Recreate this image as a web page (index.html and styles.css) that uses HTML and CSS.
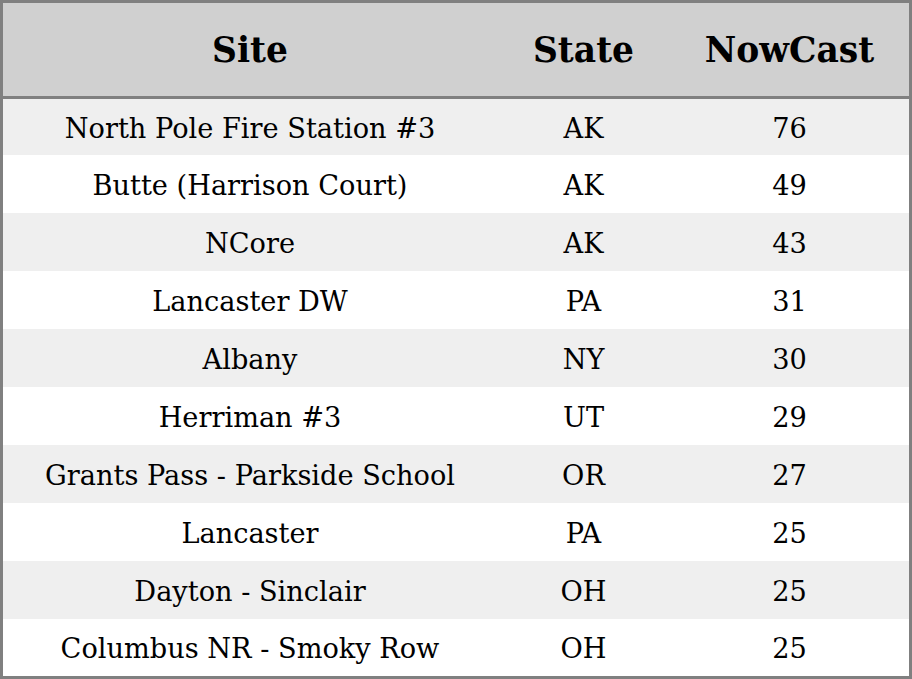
FILE: index.html
```html
<!DOCTYPE html>
<html>
<head>
<meta charset="utf-8">
<link rel="stylesheet" href="styles.css">
</head>
<body>
<div class="frame">
<table class="grid">
<thead>
<tr><th class="c-site">Site</th><th class="c-state">State</th><th class="c-now">NowCast</th></tr>
</thead>
<tbody>
<tr class="first"><td>North Pole Fire Station #3</td><td>AK</td><td>76</td></tr>
<tr><td>Butte (Harrison Court)</td><td>AK</td><td>49</td></tr>
<tr><td>NCore</td><td>AK</td><td>43</td></tr>
<tr><td>Lancaster DW</td><td>PA</td><td>31</td></tr>
<tr><td>Albany</td><td>NY</td><td>30</td></tr>
<tr><td>Herriman #3</td><td>UT</td><td>29</td></tr>
<tr><td>Grants Pass - Parkside School</td><td>OR</td><td>27</td></tr>
<tr><td>Lancaster</td><td>PA</td><td>25</td></tr>
<tr><td>Dayton - Sinclair</td><td>OH</td><td>25</td></tr>
<tr class="last"><td>Columbus NR - Smoky Row</td><td>OH</td><td>25</td></tr>
</tbody>
</table>
</div>
</body>
</html>
```
FILE: styles.css
```css
html, body {
  margin: 0;
  padding: 0;
  background: #ffffff;
}
.frame {
  width: 912px;
  height: 679px;
  box-sizing: border-box;
  border: 3px solid #808080;
  overflow: hidden;
}
.grid {
  width: 906px;
  border-collapse: collapse;
  border-spacing: 0;
  font-family: "DejaVu Serif", serif;
  color: #000;
}
.grid th {
  height: 92px;
  padding: 1px 0 0 0;
  background: #d0d0d0;
  border-bottom: 3px solid #808080;
  font-size: 34.5px;
  font-weight: bold;
  text-align: center;
}
.c-site { width: 494px; }
.c-state { width: 173px; }
.c-now { width: 239px; }
.grid td {
  box-sizing: border-box;
  height: 58px;
  padding: 3px 0 0 0;
  text-align: center;
  font-size: 27.2px;
}
.grid tbody tr:nth-child(odd) td { background: #efefef; }
.grid tbody tr.first td { height: 57px; }
.grid tbody tr.last td { height: 57px; }
```
